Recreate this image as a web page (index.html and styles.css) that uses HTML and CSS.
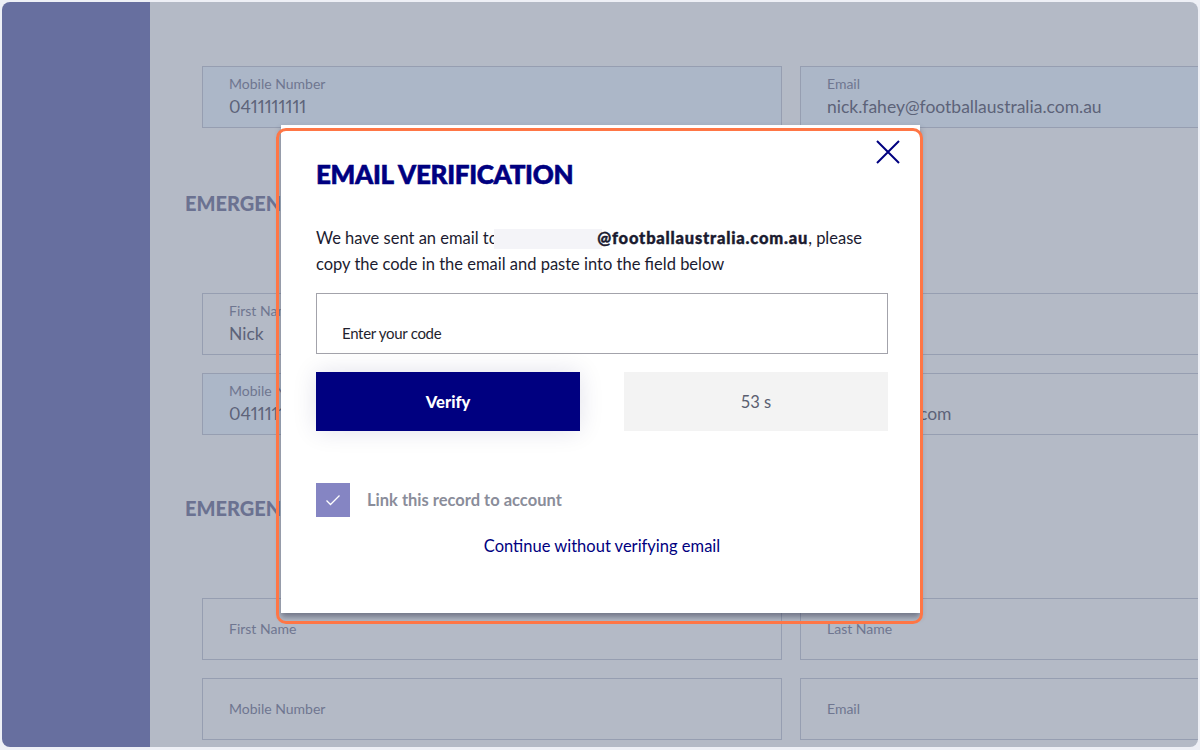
FILE: index.html
```html
<!DOCTYPE html>
<html lang="en">
<head>
    <meta charset="UTF-8">
    <meta name="viewport" content="width=device-width, initial-scale=1.0">
    <title>Email Verification</title>
    <link rel="stylesheet" href="styles.css">
</head>
<body>
    <div class="app">
        <aside class="sidebar"></aside>

        <main class="main">
            <div class="field-row">
                <div class="field filled">
                    <span class="field-label">Mobile Number</span>
                    <span class="field-value">0411111111</span>
                </div>
                <div class="field filled">
                    <span class="field-label">Email</span>
                    <span class="field-value">nick.fahey@footballaustralia.com.au</span>
                </div>
            </div>

            <h2 class="section-title first">EMERGENCY CONTACT 1</h2>

            <div class="field-row">
                <div class="field">
                    <span class="field-label">First Name</span>
                    <span class="field-value">Nick</span>
                </div>
                <div class="field">
                    <span class="field-label">Last Name</span>
                    <span class="field-value">Fahey</span>
                </div>
            </div>
            <div class="field-row">
                <div class="field filled">
                    <span class="field-label">Mobile Number</span>
                    <span class="field-value">0411111111</span>
                </div>
                <div class="field">
                    <span class="field-label">Email</span>
                    <span class="field-value">nick@fahey.com</span>
                </div>
            </div>

            <h2 class="section-title">EMERGENCY CONTACT 2</h2>

            <div class="field-row">
                <div class="field empty">
                    <span class="field-label">First Name</span>
                </div>
                <div class="field empty">
                    <span class="field-label">Last Name</span>
                </div>
            </div>
            <div class="field-row">
                <div class="field empty">
                    <span class="field-label">Mobile Number</span>
                </div>
                <div class="field empty">
                    <span class="field-label">Email</span>
                </div>
            </div>
        </main>

        <div class="modal">
            <button class="modal-close" aria-label="Close">
                <svg width="24" height="24" viewBox="0 0 24 24">
                    <path d="M1 1 L23 23 M23 1 L1 23" stroke="#000080" stroke-width="2" fill="none"/>
                </svg>
            </button>

            <h1 class="modal-title">EMAIL VERIFICATION</h1>

            <p class="modal-text">
                We have sent an email to <span class="redacted"></span><strong>@footballaustralia.com.au</strong>, please<br>
                copy the code in the email and paste into the field below
            </p>

            <div class="code-input">Enter your code</div>

            <div class="modal-actions">
                <button class="btn-verify">Verify</button>
                <div class="countdown">53 s</div>
            </div>

            <div class="check-row">
                <span class="checkbox">
                    <svg width="16" height="12" viewBox="0 0 16 12">
                        <path d="M1.5 6.5 L5.5 10.5 L14.5 1.5" stroke="#fff" stroke-width="1.3" fill="none"/>
                    </svg>
                </span>
                <span class="check-label">Link this record to account</span>
            </div>

            <a class="skip-link" href="#">Continue without verifying email</a>
        </div>

        <div class="highlight"></div>
    </div>
</body>
</html>
```

FILE: styles.css
```css
body {
    margin: 0;
    background-color: #eef0f6;
    font-family: Lato, "Open Sans", sans-serif;
}

.app {
    position: relative;
    margin: 2px;
    height: 745px;
    width: 1196px;
    display: flex;
    border-radius: 8px;
    overflow: hidden;
}

.sidebar {
    width: 148px;
    flex-shrink: 0;
    background-color: #676f9f;
}

.main {
    flex: 1;
    background-color: #b4bac6;
    padding: 64px 0 0 52px;
    overflow: hidden;
}

.field-row {
    display: grid;
    grid-template-columns: 580px 580px;
    column-gap: 18px;
    margin-bottom: 18px;
}

.field {
    box-sizing: border-box;
    height: 62px;
    border: 1px solid #969eb1;
    padding: 7px 26px 0;
    display: flex;
    flex-direction: column;
}

.field.filled {
    background-color: #acb7c8;
}

.field.empty {
    justify-content: center;
    padding-top: 0;
}

.field-label {
    font-size: 14px;
    line-height: 20px;
    color: #6f7690;
}

.field-value {
    font-size: 17.5px;
    line-height: 25px;
    color: #5d6379;
    font-variant-numeric: proportional-nums;
}

.section-title {
    margin: 61px 0 78px -17px;
    font-size: 20px;
    line-height: 24px;
    font-weight: 900;
    color: #6b7291;
}

.section-title.first {
    margin-top: 63px;
}

/* modal */
.modal {
    position: absolute;
    left: 279px;
    top: 123px;
    width: 639px;
    height: 488px;
    box-sizing: border-box;
    padding: 34px 32px 0 35px;
    background-color: #fff;
    box-shadow: 0 4px 6px rgba(30, 35, 60, 0.45);
}

.modal-close {
    position: absolute;
    top: 15px;
    right: 20px;
    padding: 0;
    border: none;
    background: none;
    cursor: pointer;
}

.modal-title {
    margin: 0;
    font-size: 26px;
    line-height: 30px;
    font-weight: 900;
    color: #000080;
    letter-spacing: -0.3px;
    -webkit-text-stroke: 0.6px #000080;
}

.modal-text {
    margin: 36px 0 0;
    font-size: 16.5px;
    line-height: 26px;
    color: #1b1b30;
}

.modal-text strong {
    font-weight: 900;
    letter-spacing: 0.8px;
    -webkit-text-stroke: 0.4px #1b1b30;
}

.redacted {
    display: inline-block;
    vertical-align: middle;
    width: 108px;
    height: 20px;
    margin: -2px -5px 0 -8px;
    background-color: #f4f4f8;
}

.code-input {
    margin-top: 16px;
    height: 61px;
    box-sizing: border-box;
    border: 1px solid #a3a3ab;
    padding: 30px 25px 0;
    font-size: 15px;
    letter-spacing: -0.3px;
    color: #1f1f2e;
}

.modal-actions {
    display: flex;
    justify-content: space-between;
    margin-top: 18px;
}

.btn-verify,
.countdown {
    width: 264px;
    height: 59px;
    display: flex;
    align-items: center;
    justify-content: center;
    font-family: Lato, sans-serif;
    font-size: 16.5px;
}

.btn-verify {
    border: none;
    background-color: #000080;
    color: #fff;
    font-weight: 900;
    box-shadow: 0 0 24px rgba(20, 20, 90, 0.12);
    cursor: pointer;
}

.countdown {
    background-color: #f3f3f3;
    color: #5a5e70;
}

.check-row {
    display: flex;
    align-items: center;
    gap: 17px;
    margin-top: 52px;
}

.checkbox {
    width: 34px;
    height: 34px;
    display: flex;
    align-items: center;
    justify-content: center;
    background-color: #8585c3;
}

.check-label {
    font-size: 16.5px;
    line-height: 20px;
    font-weight: 700;
    color: #8a8d9a;
}

.skip-link {
    display: block;
    margin-top: 19px;
    text-align: center;
    font-size: 16.5px;
    color: #000080;
    text-decoration: none;
}

/* annotation outline drawn over the modal */
.highlight {
    position: absolute;
    left: 274px;
    top: 126px;
    width: 641px;
    height: 490px;
    border: 3px solid #ff7645;
    border-radius: 10px;
    pointer-events: none;
}
```
